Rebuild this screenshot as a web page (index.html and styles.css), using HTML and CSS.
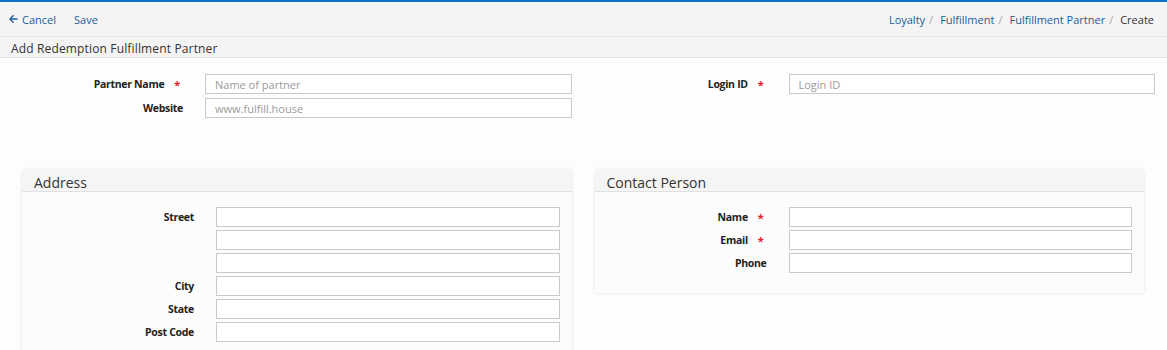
FILE: index.html
```html
<!DOCTYPE html>
<html lang="en">
<head>
    <meta charset="UTF-8">
    <title>Add Redemption Fulfillment Partner</title>
    <link rel="stylesheet" href="styles.css">
</head>
<body>

<div class="topbar">
    <div class="actions">
        <a class="action" href="#">
            <svg class="back-icon" width="9" height="10" viewBox="0 0 9 10"><path d="M8.5 5H1.2M4.6 1.2L0.9 5l3.7 3.8" fill="none" stroke="currentColor" stroke-width="1.3"/></svg>Cancel
        </a>
        <a class="action" href="#">Save</a>
    </div>
    <nav class="crumbs">
        <a href="#">Loyalty</a><span class="sep">/</span>
        <a href="#">Fulfillment</a><span class="sep">/</span>
        <a href="#">Fulfillment Partner</a><span class="sep">/</span>
        <span class="current">Create</span>
    </nav>
</div>

<div class="page-title">Add Redemption Fulfillment Partner</div>

<form class="main-form">
    <div class="form-col">
        <label class="field-label">Partner Name<span class="req">*</span></label>
        <input class="text-input" type="text" placeholder="Name of partner">
        <label class="field-label">Website</label>
        <input class="text-input" type="text" placeholder="www.fulfill.house">
    </div>
    <div class="form-col">
        <label class="field-label">Login ID<span class="req">*</span></label>
        <input class="text-input" type="text" placeholder="Login ID">
    </div>
</form>

<div class="panels">
    <section class="panel">
        <div class="panel-head">Address</div>
        <div class="panel-body">
            <label class="field-label">Street</label>
            <input class="text-input" type="text">
            <span></span>
            <input class="text-input" type="text">
            <span></span>
            <input class="text-input" type="text">
            <label class="field-label">City</label>
            <input class="text-input" type="text">
            <label class="field-label">State</label>
            <input class="text-input" type="text">
            <label class="field-label">Post Code</label>
            <input class="text-input" type="text">
        </div>
    </section>
    <section class="panel">
        <div class="panel-head">Contact Person</div>
        <div class="panel-body">
            <label class="field-label">Name<span class="req">*</span></label>
            <input class="text-input" type="text">
            <label class="field-label">Email<span class="req">*</span></label>
            <input class="text-input" type="text">
            <label class="field-label">Phone</label>
            <input class="text-input" type="text">
        </div>
    </section>
</div>

</body>
</html>
```

FILE: styles.css
```css
* {
    box-sizing: border-box;
}
body {
    margin: 0;
    background-color: #fdfdfd;
    font-family: "Open Sans", sans-serif;
    font-size: 11px;
    color: #333;
}
a {
    color: #1d5c99;
    text-decoration: none;
}
.topbar {
    display: flex;
    justify-content: space-between;
    align-items: center;
    height: 37px;
    padding: 0 13px 0 9px;
    border-top: 2px solid #0b72c5;
    border-bottom: 1px solid #e4e4e4;
    background-color: #f4f4f4;
}
.actions {
    display: flex;
    gap: 18px;
}
.action {
    display: flex;
    align-items: center;
}
.back-icon {
    margin-right: 4px;
}
.crumbs {
    display: flex;
    align-items: center;
}
.sep {
    color: #aaa;
    margin: 0 7px 0 4px;
}
.current {
    color: #333;
}
.page-title {
    height: 21px;
    padding: 3px 11px 0;
    font-size: 12px;
    letter-spacing: 0.15px;
    background-color: #f4f4f4;
    border-bottom: 1px solid #e4e4e4;
}
.main-form {
    display: grid;
    grid-template-columns: 1fr 1fr;
    padding: 16px 0 52px;
}
.form-col {
    display: grid;
    grid-template-columns: 183px 1fr;
    column-gap: 22px;
    row-gap: 4px;
    align-content: start;
    align-items: center;
    padding-right: 12px;
}
.field-label {
    display: flex;
    justify-content: flex-end;
    align-items: center;
    font-weight: 700;
    font-size: 10.5px;
    letter-spacing: -0.3px;
    color: #222;
}
.req {
    color: #e0202a;
    margin-left: 10px;
    margin-right: 3px;
    font-size: 11px;
}
.text-input {
    height: 20px;
    width: 100%;
    padding: 0 9px;
    border: 1px solid #c9c9c9;
    background-color: #fff;
    font-family: "Open Sans", sans-serif;
    font-size: 11px;
    color: #333;
}
.text-input::placeholder {
    color: #9a9a9a;
}
.panels {
    display: grid;
    grid-template-columns: 1fr 1fr;
    gap: 23px;
    padding: 0 23px 0 22px;
    align-items: start;
}
.panel {
    background-color: #fcfcfc;
    box-shadow: 0 0 3px rgba(0, 0, 0, 0.12);
    border-radius: 2px;
}
.panel-head {
    height: 22px;
    padding: 4px 12px 0;
    font-size: 14px;
    line-height: 17px;
    background-color: #f5f5f5;
    border-bottom: 1px solid #e0e0e0;
}
.panel-body {
    display: grid;
    grid-template-columns: 172px 1fr;
    column-gap: 22px;
    row-gap: 3px;
    align-items: center;
    padding: 15px 12px 20px 0;
}
```
